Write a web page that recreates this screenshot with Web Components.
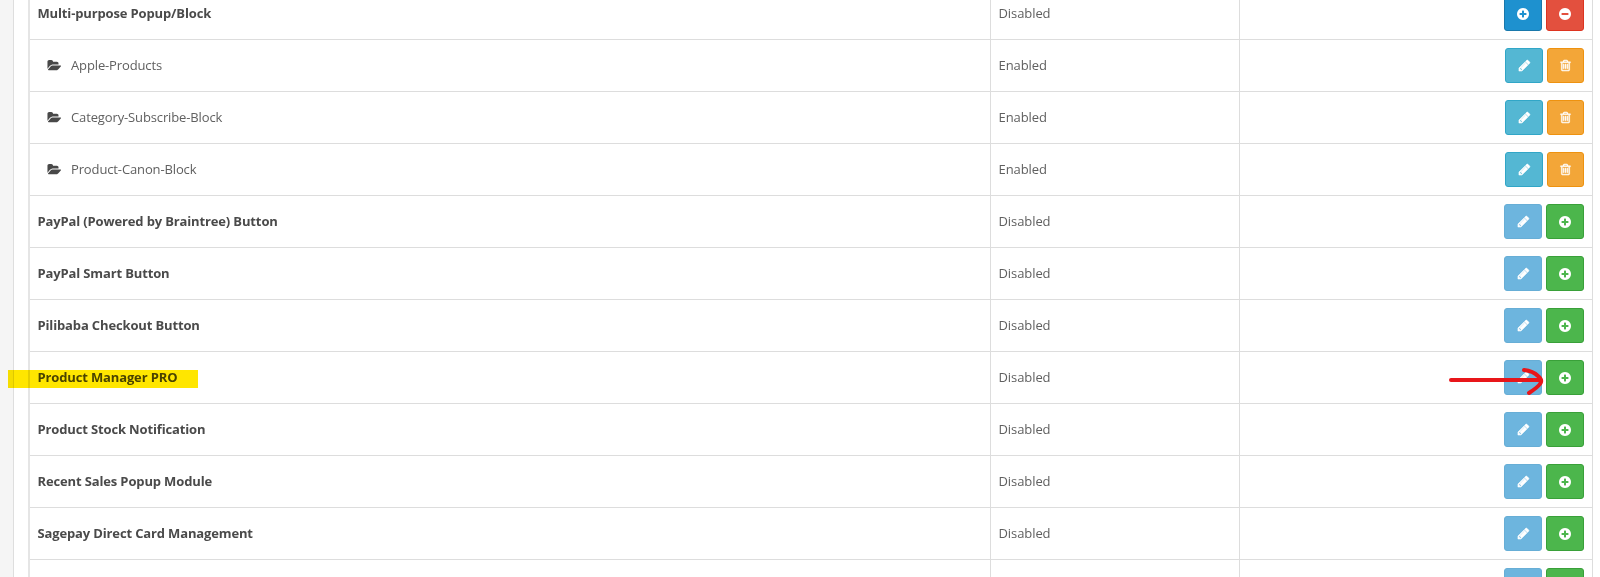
<!DOCTYPE html>
<html lang="en">
<head>
<meta charset="utf-8">
<title>Modules</title>
<style>
html,body{margin:0;height:100%;overflow:hidden;background:#f5f5f5}
</style>
</head>
<body>
<module-page></module-page>
<script>
const ICONS = {
  pencil: ['0 0 1792 1792', 'M491 1536l91-91-235-235-91 91v107h128v128h107zm523-928q0-22-22-22-10 0-17 7l-542 542q-7 7-7 17 0 22 22 22 10 0 17-7l542-542q7-7 7-17zm-54-192l416 416-832 832h-416v-416zm683 96q0 53-37 90l-166 166-416-416 166-165q36-38 90-38 53 0 91 38l235 234q37 39 37 91z'],
  plus: ['0 0 1792 1792', 'M1344 960v-128q0-26-19-45t-45-19h-256v-256q0-26-19-45t-45-19h-128q-26 0-45 19t-19 45v256h-256q-26 0-45 19t-19 45v128q0 26 19 45t45 19h256v256q0 26 19 45t45 19h128q26 0 45-19t19-45v-256h256q26 0 45-19t19-45zm320-64q0 209-103 385.5t-279.5 279.5-385.5 103-385.5-103-279.5-279.5-103-385.5 103-385.5 279.5-279.5 385.5-103 385.5 103 279.5 279.5 103 385.5z'],
  minus: ['0 0 1792 1792', 'M1344 960v-128q0-26-19-45t-45-19h-768q-26 0-45 19t-19 45v128q0 26 19 45t45 19h768q26 0 45-19t19-45zm320-64q0 209-103 385.5t-279.5 279.5-385.5 103-385.5-103-279.5-279.5-103-385.5 103-385.5 279.5-279.5 385.5-103 385.5 103 279.5 279.5 103 385.5z'],
  trash: ['0 0 1792 1792', 'M704 736v576q0 14-9 23t-23 9h-64q-14 0-23-9t-9-23v-576q0-14 9-23t23-9h64q14 0 23 9t9 23zm256 0v576q0 14-9 23t-23 9h-64q-14 0-23-9t-9-23v-576q0-14 9-23t23-9h64q14 0 23 9t9 23zm256 0v576q0 14-9 23t-23 9h-64q-14 0-23-9t-9-23v-576q0-14 9-23t23-9h64q14 0 23 9t9 23zm128 724v-948h-896v948q0 22 7 40.5t14.5 27 10.5 8.5h832q3 0 10.5-8.5t14.5-27 7-40.5zm-672-1076h448l-48-117q-7-9-17-11h-317q-10 2-17 11zm928 32v64q0 14-9 23t-23 9h-96v948q0 83-47 143.5t-113 60.5h-832q-66 0-113-58.5t-47-141.5v-952h-96q-14 0-23-9t-9-23v-64q0-14 9-23t23-9h309l70-167q15-37 54-63t79-26h320q40 0 79 26t54 63l70 167h309q14 0 23 9t9 23z'],
  folder: ['0 0 1944 1792', 'M1943 952q0 31-31 66l-336 396q-43 51-120.5 86.5t-143.5 35.5h-1088q-34 0-60.5-13t-26.5-43q0-31 31-66l336-396q43-51 120.5-86.5t143.5-35.5h1088q34 0 60.5 13t26.5 43zm-343-344v160h-832q-94 0-197 47.5t-164 119.5l-337 396-5 6q0-4-.5-12.5t-.5-12.5v-960q0-92 66-158t158-66h320q92 0 158 66t66 158v32h544q92 0 158 66t66 158z']
};

class FaIcon extends HTMLElement {
  connectedCallback() {
    const [box, d] = ICONS[this.getAttribute('name')];
    this.attachShadow({mode: 'open'}).innerHTML = `
      <style>
      :host{display:block;flex:none;width:14px;height:14px}
      :host([name=trash]){width:13px;height:13px}
      :host([name=pencil]){width:13px;height:13px;margin-left:1px}
      svg{display:block;width:100%;height:100%;fill:currentColor;stroke:currentColor;stroke-width:0}
      :host([name=trash]) svg{stroke-width:60px}
      :host([name=pencil]) svg{stroke-width:70px}
      </style>
      <svg viewBox="${box}" preserveAspectRatio="none"><path d="${d}"/></svg>`;
  }
}
customElements.define('fa-icon', FaIcon);

class ActionButton extends HTMLElement {
  connectedCallback() {
    this.attachShadow({mode: 'open'}).innerHTML = `
      <style>
      :host{display:block;width:38px;height:35px}
      :host([narrow]){width:37px}
      button{display:flex;align-items:center;justify-content:center;box-sizing:border-box;width:100%;height:100%;margin:0;padding:0;border:1px solid;border-radius:3px;color:#fff}
      .primary{background:#1e91cf;border-color:#1978ab}
      .danger{background:#e3503e;border-color:#dd3420}
      .info{background:#54b7d3;border-color:#31a6c7}
      .muted{background:#6db5de;border-color:#67aed6}
      .warning{background:#f3a638;border-color:#ee920f}
      .success{background:#4cb64c;border-color:#39a039}
      </style>
      <button class="${this.getAttribute('kind')}"><fa-icon name="${this.getAttribute('icon')}"></fa-icon></button>`;
  }
}
customElements.define('action-button', ActionButton);

class ModuleRow extends HTMLElement {
  connectedCallback() {
    const child = this.hasAttribute('child');
    const actions = this.hasAttribute('parent')
      ? [['primary', 'plus'], ['danger', 'minus']]
      : child ? [['info', 'pencil'], ['warning', 'trash']]
      : [['muted', 'pencil'], ['success', 'plus']];
    this.attachShadow({mode: 'open'}).innerHTML = `
      <style>
      :host{display:grid;grid-template-columns:961px 249px 1fr;height:52px;box-sizing:border-box;border-bottom:1px solid #ddd;font-weight:400}
      .cell{display:flex;align-items:center;padding:0 8px 1px;box-sizing:border-box;border-right:1px solid #ddd}
      .name{padding-left:7.5px;letter-spacing:-.14px;font-weight:${child ? 400 : 700};color:${child ? '#606060' : '#4a4a4a'};${child ? 'padding-left:17px;letter-spacing:-.13px' : ''}}
      .status{letter-spacing:-.08px;padding-left:7.5px}
      .name fa-icon{width:14px;height:13px;margin-right:10px;color:#484848}
      .actions{justify-content:flex-end;gap:4px;padding:0 8px 0 0}
      .text{position:relative}
      .mark{display:block;position:absolute;left:-30px;top:3px;width:190px;height:18px;background:#ffe600;mix-blend-mode:multiply}
      </style>
      <div class="cell name">${child ? '<fa-icon name="folder"></fa-icon>' : ''}<span class="text"><slot></slot>${this.hasAttribute('marked') ? '<i class="mark"></i>' : ''}</span></div>
      <div class="cell status">${this.getAttribute('status')}</div>
      <div class="cell actions">${actions.map(([k, i]) => `<action-button kind="${k}" icon="${i}"></action-button>`).join('')}</div>`;
    if (child) this.shadowRoot.querySelector('[kind=warning]').setAttribute('narrow', '');
  }
}
customElements.define('module-row', ModuleRow);

class ArrowNote extends HTMLElement {
  connectedCallback() {
    this.attachShadow({mode: 'open'}).innerHTML = `
      <style>:host{display:block;position:absolute;left:1445px;top:364px;width:102px;height:34px}svg{display:block}</style>
      <svg width="102" height="34" fill="none" stroke="#e8161a" stroke-width="4" stroke-linecap="round" stroke-linejoin="round">
      <path d="M6 16H95"/><path d="M79 6Q88 7 93 12Q98 16 95 20Q93 23 84 29"/></svg>`;
  }
}
customElements.define('arrow-note', ArrowNote);

class ModulePage extends HTMLElement {
  connectedCallback() {
    this.attachShadow({mode: 'open'}).innerHTML = `
      <style>
      :host{display:block;position:relative;height:577px;overflow:hidden;box-sizing:border-box;padding-left:13px;font:13px/20px "Open Sans",sans-serif;color:#606060}
      .panel{display:flow-root;height:100%;box-sizing:border-box;background:#fff;border-left:1px solid #dedede;padding:0 7px 0 14px}
      .table{margin-top:-12px;border-left:2px solid #e5e5e5}
      </style>
      <div class="panel"><div class="table">
      <module-row parent status="Disabled">Multi-purpose Popup/Block</module-row>
      <module-row child status="Enabled">Apple-Products</module-row>
      <module-row child status="Enabled">Category-Subscribe-Block</module-row>
      <module-row child status="Enabled">Product-Canon-Block</module-row>
      <module-row status="Disabled">PayPal (Powered by Braintree) Button</module-row>
      <module-row status="Disabled">PayPal Smart Button</module-row>
      <module-row status="Disabled">Pilibaba Checkout Button</module-row>
      <module-row marked status="Disabled">Product Manager PRO</module-row>
      <module-row status="Disabled">Product Stock Notification</module-row>
      <module-row status="Disabled">Recent Sales Popup Module</module-row>
      <module-row status="Disabled">Sagepay Direct Card Management</module-row>
      <module-row status=""></module-row>
      </div></div>
      <arrow-note></arrow-note>`;
  }
}
customElements.define('module-page', ModulePage);
</script>
</body>
</html>
